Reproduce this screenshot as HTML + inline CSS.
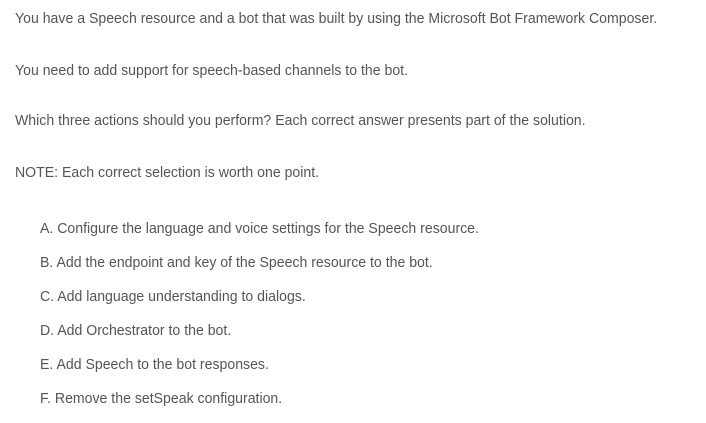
<!DOCTYPE html>
<html><head><style>
body{margin:0;width:706px;height:423px;background:#fff;overflow:hidden;font-family:"Liberation Sans",sans-serif;font-size:15px;color:#555;}
div{position:absolute;white-space:nowrap;transform:scaleX(0.94);transform-origin:0 50%;line-height:20px;}
</style></head><body>
<div style="left:15px;top:9px">You have a Speech resource and a bot that was built by using the Microsoft Bot Framework Composer.</div>
<div style="left:15px;top:61px">You need to add support for speech-based channels to the bot.</div>
<div style="left:15px;top:111px">Which three actions should you perform? Each correct answer presents part of the solution.</div>
<div style="left:15px;top:163px">NOTE: Each correct selection is worth one point.</div>
<div style="left:40px;top:219px">A. Configure the language and voice settings for the Speech resource.</div>
<div style="left:40px;top:253px">B. Add the endpoint and key of the Speech resource to the bot.</div>
<div style="left:40px;top:287px">C. Add language understanding to dialogs.</div>
<div style="left:40px;top:321px">D. Add Orchestrator to the bot.</div>
<div style="left:40px;top:355px">E. Add Speech to the bot responses.</div>
<div style="left:40px;top:389px">F. Remove the setSpeak configuration.</div>
</body></html>
